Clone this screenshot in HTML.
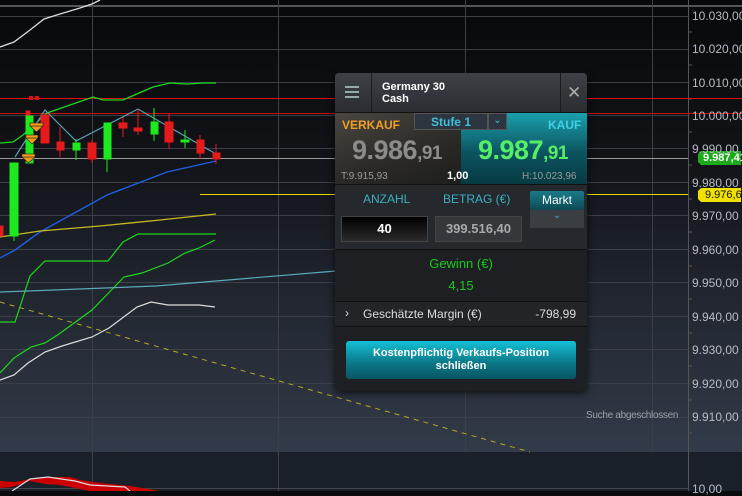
<!DOCTYPE html>
<html><head><meta charset="utf-8"><style>
*{margin:0;padding:0;box-sizing:border-box}
body{width:742px;height:491px;overflow:hidden;background:#0a0b0d;font-family:"Liberation Sans",sans-serif;position:relative}
svg{position:absolute;left:0;top:0}
.ax{position:absolute;left:692px;font-size:12px;color:#b8bcc2;line-height:14px}
.panel{position:absolute;left:335px;top:73px;width:252px;height:318px;background:#1d1f22;border-radius:4px;box-shadow:0 2px 8px rgba(0,0,0,.7);overflow:hidden}
.abs{position:absolute}
</style></head><body>
<svg width="742" height="491">
<defs>
<linearGradient id="bg" x1="0" y1="0" x2="0" y2="1"><stop offset="0" stop-color="#08090b"/><stop offset="0.35" stop-color="#111318"/><stop offset="1" stop-color="#323b49"/></linearGradient>
</defs>
<rect x="0" y="0" width="742" height="452" fill="url(#bg)"/>
<rect x="0" y="452" width="742" height="39" fill="#19202a"/>
<line x1="0" y1="6" x2="742" y2="6" stroke="#555" stroke-width="2"/>
<g stroke="#3a3f48" stroke-width="1">
<line x1="0" y1="16.5" x2="688" y2="16.5"/><line x1="0" y1="49.5" x2="688" y2="49.5"/><line x1="0" y1="82.5" x2="688" y2="82.5"/><line x1="0" y1="115.5" x2="688" y2="115.5"/><line x1="0" y1="148.5" x2="688" y2="148.5"/><line x1="0" y1="182.5" x2="688" y2="182.5"/><line x1="0" y1="215.5" x2="688" y2="215.5"/><line x1="0" y1="249.5" x2="688" y2="249.5"/><line x1="0" y1="282.5" x2="688" y2="282.5"/><line x1="0" y1="316.5" x2="688" y2="316.5"/><line x1="0" y1="349.5" x2="688" y2="349.5"/><line x1="0" y1="383.5" x2="688" y2="383.5"/><line x1="0" y1="417.5" x2="688" y2="417.5"/>
<line x1="92.5" y1="0" x2="92.5" y2="452"/><line x1="278.5" y1="0" x2="278.5" y2="452"/><line x1="465.5" y1="0" x2="465.5" y2="452"/><line x1="652.5" y1="0" x2="652.5" y2="452"/>
<line x1="92.5" y1="452" x2="92.5" y2="491"/><line x1="278.5" y1="452" x2="278.5" y2="491"/><line x1="0" y1="488.5" x2="688" y2="488.5" stroke="#444"/>
</g>
<line x1="688.5" y1="0" x2="688.5" y2="491" stroke="#555"/>
<g stroke="#555">
<line x1="688" y1="32" x2="692" y2="32"/><line x1="688" y1="65" x2="692" y2="65"/><line x1="688" y1="99" x2="692" y2="99"/><line x1="688" y1="132" x2="692" y2="132"/><line x1="688" y1="165" x2="692" y2="165"/><line x1="688" y1="199" x2="692" y2="199"/><line x1="688" y1="232" x2="692" y2="232"/><line x1="688" y1="266" x2="692" y2="266"/><line x1="688" y1="299" x2="692" y2="299"/><line x1="688" y1="333" x2="692" y2="333"/><line x1="688" y1="366" x2="692" y2="366"/><line x1="688" y1="400" x2="692" y2="400"/><line x1="688" y1="433" x2="692" y2="433"/>
</g>
<line x1="0" y1="98.5" x2="742" y2="98.5" stroke="#e01010"/>
<line x1="0" y1="113.5" x2="742" y2="113.5" stroke="#c81010"/>
<rect x="29" y="96" width="4" height="4" fill="#e01010"/><rect x="35" y="96" width="4" height="4" fill="#e01010"/>
<line x1="0" y1="158.5" x2="688" y2="158.5" stroke="#9a9a9a"/>
<line x1="200" y1="194.5" x2="688" y2="194.5" stroke="#e8d800"/>
<polyline points="0,47 14,42 30,30 44,19 60,14 80,8 92,4 100,0" fill="none" stroke="#ddd" stroke-width="1.3"/>
<polyline points="0,143 13,142 23,135 47,113 93,97 103,100 123,100 153,87 170,83 187,84 203,83 216,83" fill="none" stroke="#1ed81e" stroke-width="1.3"/>
<polyline points="15,157 45,110 76,141 138,109 216,154" fill="none" stroke="#5a9fb0" stroke-width="1.2"/>
<polyline points="0,258 15,250 40,232 107,195 167,172 216,161" fill="none" stroke="#1f5fe0" stroke-width="1.4"/>
<polyline points="0,237 40,231 100,226 160,220 216,214" fill="none" stroke="#c8b820" stroke-width="1.3"/>
<polyline points="0,322 15,322 30,276 45,261 108,261 123,242 138,234 216,234" fill="none" stroke="#1ed81e" stroke-width="1.2"/>
<polyline points="0,373 14,358 31,347 45,343 59,334 92,310 124,277 142,273 168,263 185,253 199,248 215,240" fill="none" stroke="#1ed81e" stroke-width="1.2"/>
<polyline points="0,292 28,291 156,286 336,271" fill="none" stroke="#5aaabb" stroke-width="1.2"/>
<polyline points="0,380 14,375 28,363 45,352 62,346 92,337 109,328 137,307 151,302 168,305 199,305 215,307" fill="none" stroke="#ddd" stroke-width="1.2"/>
<line x1="0" y1="302" x2="530" y2="452" stroke="#b8a820" stroke-dasharray="5,5"/>
<g fill="#e51a1a" stroke="#e51a1a">
<rect x="0" y="226" width="3" height="10"/>
<rect x="41" y="115" width="8" height="28"/>
<line x1="60" y1="127" x2="60" y2="157"/><rect x="57" y="142" width="7" height="8"/>
<line x1="92" y1="140" x2="92" y2="163"/><rect x="88" y="143" width="8" height="16"/>
<line x1="123" y1="117" x2="123" y2="137"/><rect x="119" y="123" width="8" height="5"/>
<line x1="138" y1="109" x2="138" y2="135"/><rect x="134" y="128" width="8" height="3"/>
<line x1="169" y1="114" x2="169" y2="149"/><rect x="165" y="122" width="8" height="20"/>
<line x1="200" y1="135" x2="200" y2="159"/><rect x="197" y="140" width="7" height="13"/>
<line x1="216" y1="144" x2="216" y2="164"/><rect x="213" y="153" width="7" height="6"/>
<rect x="26" y="111" width="4" height="4"/>
</g>
<g fill="#1ee81e" stroke="#1ee81e">
<line x1="14" y1="236" x2="14" y2="241"/><rect x="10" y="163" width="8" height="73"/>
<rect x="26" y="116" width="7" height="47"/>
<line x1="76" y1="139" x2="76" y2="160"/><rect x="73" y="143" width="7" height="7"/>
<line x1="107" y1="123" x2="107" y2="172"/><rect x="104" y="123" width="7" height="36"/>
<line x1="154" y1="108" x2="154" y2="141"/><rect x="151" y="122" width="7" height="12"/>
<line x1="185" y1="130" x2="185" y2="148"/><rect x="181" y="140" width="8" height="2"/>
</g>
<g fill="#f59a1a" stroke="#222" stroke-width="0.6">
<path d="M30,126 h13 l-6.5,6z"/><rect x="30" y="123" width="13" height="3"/>
<path d="M26,138 h12 l-6,6z"/><rect x="26" y="135" width="12" height="3"/>
<path d="M22,157 h13 l-6.5,6z"/><rect x="22" y="154" width="13" height="3"/>
</g>
<path d="M0,481 L15,482 L30,479 L45,477 L70,477 L80,480 L100,483 L130,486 L160,491 L90,491 L60,485 L45,484 L30,481 L12,487 L0,488z" fill="#c00"/>
<polyline points="12,491 30,479 48,477 75,481 90,485 125,487 130,491" fill="none" stroke="#ddd" stroke-width="1.2"/>
<path d="M701,151 h40 v14 h-40 l-3,-3 v-8z" fill="#1aaa1a"/>
<path d="M701,188 h40 v14 h-40 l-3,-3 v-8z" fill="#f0e000"/>
</svg>
<div class="ax" style="top:9px">10.030,00</div>
<div class="ax" style="top:42px">10.020,00</div>
<div class="ax" style="top:76px">10.010,00</div>
<div class="ax" style="top:109px">10.000,00</div>
<div class="ax" style="top:142px">9.990,00</div>
<div class="ax" style="top:176px">9.980,00</div>
<div class="ax" style="top:209px">9.970,00</div>
<div class="ax" style="top:243px">9.960,00</div>
<div class="ax" style="top:276px">9.950,00</div>
<div class="ax" style="top:310px">9.940,00</div>
<div class="ax" style="top:343px">9.930,00</div>
<div class="ax" style="top:377px">9.920,00</div>
<div class="ax" style="top:410px">9.910,00</div>
<div class="ax" style="top:482px">10,00</div>
<div class="abs" style="left:703px;top:152px;font-size:11px;font-weight:bold;color:#fff">9.987,41</div>
<div class="abs" style="left:705px;top:189px;font-size:11px;color:#111">9.976,64</div>
<div class="abs" style="left:586px;top:410px;font-size:10px;color:#9aa0a8;letter-spacing:-0.3px">Suche abgeschlossen</div>

<div class="panel">
 <div class="abs" style="left:0;top:0;width:252px;height:40px;background:linear-gradient(#3d4147,#2a2d32);border-bottom:1px solid #111"></div>
 <div class="abs" style="left:36px;top:0;width:1px;height:40px;background:#1a1b1d"></div>
 <div class="abs" style="left:225px;top:0;width:1px;height:40px;background:#1a1b1d"></div>
 <div class="abs" style="left:10px;top:13px;width:14px;height:2px;background:#9aa;box-shadow:0 5px 0 #9aa,0 10px 0 #9aa"></div>
 <div class="abs" style="left:47px;top:8px;font-size:11px;font-weight:bold;color:#fff;line-height:12px">Germany 30<br>Cash</div>
 <div class="abs" style="left:232px;top:10px;font-size:17px;color:#aaa">✕</div>
 <div class="abs" style="left:0;top:40px;width:126px;height:71px;background:linear-gradient(160deg,#4a4640,#2a2926 60%,#1e1e1e)"></div>
 <div class="abs" style="left:126px;top:40px;width:126px;height:71px;background:linear-gradient(#1aa0ad,#0b5560 55%,#073a42)"></div>
 <div class="abs" style="left:79px;top:40px;width:74px;height:17px;background:#2c3540;border:1px solid #555"></div>
 <div class="abs" style="left:153px;top:40px;width:19px;height:17px;background:#2c3540;border:1px solid #555;color:#3cc;font-size:10px;text-align:center;line-height:14px">⌄</div>
 <div class="abs" style="left:79px;top:42px;width:74px;text-align:center;font-size:12px;font-weight:bold;color:#3ec0d8">Stufe 1</div>
 <div class="abs" style="left:7px;top:45px;font-size:12px;font-weight:bold;color:#f0a020">VERKAUF</div>
 <div class="abs" style="left:213px;top:45px;font-size:12px;font-weight:bold;color:#3ed0e8">KAUF</div>
 <div class="abs" style="left:17px;top:62px;font-size:27px;font-weight:bold;color:#8c8c8c;letter-spacing:-0.5px">9.986<span style="font-size:19px">,91</span></div>
 <div class="abs" style="left:143px;top:62px;font-size:27px;font-weight:bold;color:#55ee66;letter-spacing:-0.5px">9.987<span style="font-size:19px">,91</span></div>
 <div class="abs" style="left:6px;top:98px;font-size:10px;color:#999">T:9.915,93</div>
 <div class="abs" style="left:112px;top:97px;font-size:11px;font-weight:bold;color:#fff">1,00</div>
 <div class="abs" style="left:187px;top:98px;font-size:10px;color:#999">H:10.023,96</div>
 <div class="abs" style="left:0;top:111px;width:252px;height:66px;background:#25282c;border-top:1px solid #111;border-bottom:1px solid #111"></div>
 <div class="abs" style="left:28px;top:119px;font-size:12px;color:#3ab0c0">ANZAHL</div>
 <div class="abs" style="left:108px;top:119px;font-size:12px;color:#3ab0c0">BETRAG (€)</div>
 <div class="abs" style="left:6px;top:143px;width:87px;height:26px;background:linear-gradient(#000,#2a2a2a);border:1px solid #444;color:#fff;font-weight:bold;font-size:13px;text-align:center;line-height:24px">40</div>
 <div class="abs" style="left:100px;top:143px;width:87px;height:26px;background:#34373b;border:1px solid #444;color:#aaa;font-weight:bold;font-size:13px;text-align:center;line-height:24px">399.516,40</div>
 <div class="abs" style="left:195px;top:118px;width:54px;height:19px;background:linear-gradient(#1a7a88,#0c4a55);border-radius:2px;color:#fff;font-size:12px;text-align:center;line-height:18px">Markt</div>
 <div class="abs" style="left:195px;top:137px;width:54px;height:18px;background:#3a3d42;color:#3ab0c0;font-size:10px;text-align:center;line-height:12px">⌄</div>
 <div class="abs" style="left:0;top:183px;width:252px;text-align:center;font-size:13px;color:#1cc81c">Gewinn (€)</div>
 <div class="abs" style="left:0;top:205px;width:252px;text-align:center;font-size:13px;color:#1cc81c">4,15</div>
 <div class="abs" style="left:0;top:228px;width:252px;height:26px;background:#222427;border-top:1px solid #111;border-bottom:1px solid #111"></div>
 <div class="abs" style="left:10px;top:233px;font-size:12px;color:#ddd">›</div>
 <div class="abs" style="left:28px;top:234px;font-size:12px;color:#ddd">Geschätzte Margin (€)</div>
 <div class="abs" style="right:11px;top:234px;font-size:12px;color:#ddd">-798,99</div>
 <div class="abs" style="left:11px;top:268px;width:230px;height:38px;background:linear-gradient(#14c0d6,#0a7585 60%,#075664);border-radius:3px;color:#fff;font-weight:bold;font-size:11px;text-align:center;line-height:13px;padding-top:6px">Kostenpflichtig Verkaufs-Position<br>schließen</div>
</div>
</body></html>
